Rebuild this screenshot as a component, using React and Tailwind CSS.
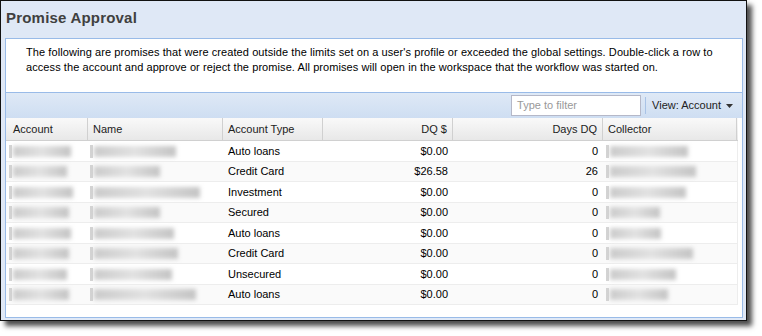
import React from "react";

const columns = [
  { label: "Account", width: "w-[82px]", align: "left", pad: "pl-[7px]" },
  { label: "Name", width: "w-[135px]", align: "left", pad: "pl-[5px]" },
  { label: "Account Type", width: "w-[100px]", align: "left", pad: "pl-[5px]" },
  { label: "DQ $", width: "w-[130px]", align: "right", pad: "pr-[5px]" },
  { label: "Days DQ", width: "w-[150px]", align: "right", pad: "pr-[5px]" },
  { label: "Collector", width: "w-[134px]", align: "left", pad: "pl-[5px]" },
];

// blurred widths in px: account, name, collector
const rows = [
  { type: "Auto loans", dq: "$0.00", days: "0", acc: 62, name: 86, col: 82 },
  { type: "Credit Card", dq: "$26.58", days: "26", acc: 58, name: 70, col: 90 },
  { type: "Investment", dq: "$0.00", days: "0", acc: 64, name: 110, col: 80 },
  { type: "Secured", dq: "$0.00", days: "0", acc: 60, name: 70, col: 54 },
  { type: "Auto loans", dq: "$0.00", days: "0", acc: 62, name: 84, col: 55 },
  { type: "Credit Card", dq: "$0.00", days: "0", acc: 60, name: 88, col: 87 },
  { type: "Unsecured", dq: "$0.00", days: "0", acc: 58, name: 82, col: 70 },
  { type: "Auto loans", dq: "$0.00", days: "0", acc: 60, name: 106, col: 62 },
];

const Blur = ({ w }) => (
  <div className="relative h-[13px]" style={{ width: w }}>
    <div className="absolute left-0 top-0 h-full w-[3px] bg-[#d4d4d4] blur-[0.5px]" />
    <div className="absolute left-[4px] right-0 top-[1px] h-[11px] bg-gradient-to-r from-[#cbcbcb] via-[#e2e2e2] to-[#c4c4c4] blur-[2px]" />
  </div>
);

const App = () => {
  return (
    <div className="w-[762px] h-[336px] bg-white font-['Liberation_Sans',Arial,sans-serif]">
      <div className="w-[747px] h-[321px] border border-[#111] bg-[#dfe8f6] shadow-[5px_5px_5px_rgba(0,0,0,0.7)] flex flex-col">
        <div className="h-[37px] pl-[5px] pt-[8px] shrink-0">
          <h1 className="text-[15px] leading-[18px] font-bold tracking-[0.2px] text-[#404040]">
            Promise Approval
          </h1>
        </div>

        <div className="flex-1 ml-[4px] mr-[3px] mb-[2px] border border-[#99bbe8] bg-white flex flex-col">
          <div className="h-[54px] shrink-0 border-b border-[#99bbe8] pl-[20px] pr-[10px] pt-[6px] text-[11px] leading-[15px] tracking-[0.08px] text-black">
            The following are promises that were created outside the limits set
            on a user's profile or exceeded the global settings. Double-click a
            row to access the account and approve or reject the promise. All
            promises will open in the workspace that the workflow was started on.
          </div>

          <div className="h-[25px] shrink-0 flex items-center justify-end bg-gradient-to-b from-[#dfe9f6] to-[#cedef2] pr-[9px]">
            <div className="w-[130px] h-[21px] border border-[#b5b8c8] bg-white flex items-center pl-[5px] text-[11px] text-[#999]">
              Type to filter
            </div>
            <div className="w-px h-[17px] bg-[#a9c3e6] ml-[4px] mr-[6px]" />
            <div className="flex items-center gap-[5px] text-[11px] text-[#222]">
              <span>View: Account</span>
              <svg width="7" height="4" viewBox="0 0 7 4">
                <path d="M0 0h7L3.5 4z" fill="#333" />
              </svg>
            </div>
          </div>

          <div className="w-[732px] flex-1 flex flex-col">
            <div className="h-[23px] shrink-0 flex border-b border-[#d0d0d0] bg-gradient-to-b from-[#f9f9f9] to-[#e8e8e8]">
              {columns.map((c) => (
                <div
                  key={c.label}
                  className={`${c.width} ${c.pad} h-full flex items-center border-r border-[#d0d0d0] text-[11px] text-[#222] ${
                    c.align === "right" ? "justify-end" : "justify-start"
                  }`}
                >
                  {c.label}
                </div>
              ))}
            </div>

            {rows.map((r, i) => (
              <div
                key={i}
                className={`${i % 2 === 0 ? "h-[21px] bg-white" : "h-[20px] bg-[#fafafa]"} flex border-b border-r border-[#ededed] text-[11px] text-black`}
              >
                <div className="w-[82px] pl-[3px] flex items-center">
                  <Blur w={r.acc} />
                </div>
                <div className="w-[135px] pl-[2px] flex items-center">
                  <Blur w={r.name} />
                </div>
                <div className="w-[100px] pl-[5px] flex items-center">
                  {r.type}
                </div>
                <div className="w-[130px] pr-[5px] flex items-center justify-end">
                  {r.dq}
                </div>
                <div className="w-[150px] pr-[5px] flex items-center justify-end">
                  {r.days}
                </div>
                <div className="w-[134px] pl-[3px] flex items-center">
                  <Blur w={r.col} />
                </div>
              </div>
            ))}
          </div>
        </div>
      </div>
    </div>
  );
};

export default App;
